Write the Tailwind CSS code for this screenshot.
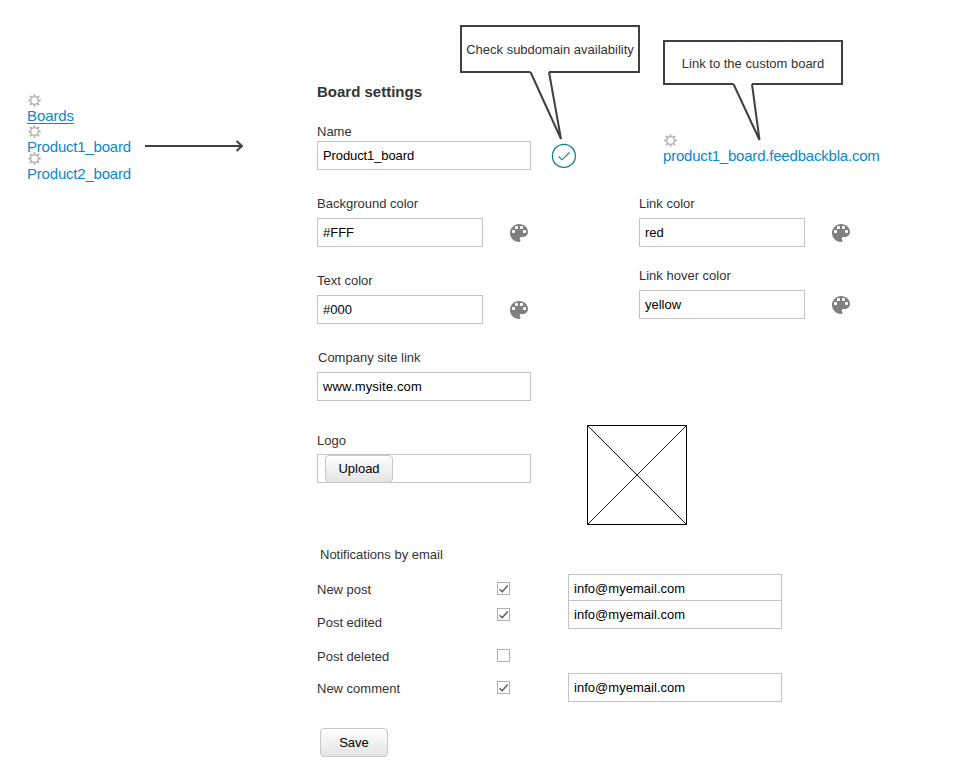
<!DOCTYPE html>
<html lang="en">
<head>
<meta charset="utf-8">
<title>Board settings</title>
<script src="https://cdn.jsdelivr.net/npm/@tailwindcss/browser@4"></script>
</head>
<body class="bg-white">
<svg class="hidden">
  <symbol id="gear" viewBox="0 0 14 14"><g fill="none" stroke="#b2b2b2"><circle cx="7" cy="7" r="4.100" stroke-width="1.400"/><path stroke-width="2" d="M7 .3V3M7 11v2.700M.3 7H3M11 7h2.700M2.100 2.100l1.800 1.800M10.100 10.100l1.800 1.800M2.100 11.900l1.800-1.800M10.100 3.900l1.800-1.800"/></g></symbol>
  <symbol id="palette" viewBox="0 0 18 18"><path fill="#808080" d="M9 0C4.030 0 0 4.030 0 9s4.030 9 9 9c.83 0 1.500-.67 1.500-1.500 0-.39-.15-.74-.39-1.010-.23-.26-.38-.61-.38-.99 0-.83.67-1.500 1.500-1.500H13c2.760 0 5-2.240 5-5 0-4.420-4.030-8-9-8z"/><g fill="#fff"><rect x="2" y="6" width="3" height="3" rx=".9"/><rect x="5" y="2" width="3" height="3" rx=".9"/><rect x="10" y="2" width="3" height="3" rx=".9"/><rect x="13" y="6" width="3" height="3" rx=".9"/></g></symbol>
  <symbol id="tick" viewBox="0 0 11 11"><path d="M1.500 6.200 4.200 8.700 9.700 2.500" fill="none" stroke="#555" stroke-width="1.300"/></symbol>
</svg>
<div class="relative flex h-[762px] w-[955px] overflow-hidden font-['Liberation_Sans',Arial,sans-serif] text-[13px] leading-4 text-[#333]">
  <nav class="ml-[27px] flex w-[118px] flex-col items-start pt-[94px] text-[15px] leading-4 tracking-[-0.2px] text-[#0a87d0]">
    <svg class="ml-px h-[13px] w-[13px]"><use href="#gear"/></svg>
    <a class="mt-px h-4 tracking-[-0.1px] underline underline-offset-2">Boards</a>
    <svg class="ml-px mt-px h-[13px] w-[13px]"><use href="#gear"/></svg>
    <a class="mt-px h-[13px]">Product1_board</a>
    <svg class="ml-px h-[13px] w-[13px]"><use href="#gear"/></svg>
    <a class="mt-px">Product2_board</a>
  </nav>
  <svg class="mt-[140px] h-[13px] w-[99px]" fill="none" stroke="#404040" stroke-width="2"><path d="M0 6H97M91.500 1l5.500 5-5.500 5"/></svg>
  <main class="ml-[73px] w-[600px] pt-[83px]">
    <h1 class="text-[15px] leading-[18px] font-bold">Board settings</h1>
    <section class="mt-[22px] flex h-[72px]">
      <div class="w-[214px]">
        <div class="h-[18px] pt-px">Name</div>
        <div class="h-[29px] border border-[#c3c3c3] pl-[5px] leading-[27px] tracking-[-0.1px] text-black">Product1_board</div>
      </div>
      <svg class="mt-[20px] ml-[20px] h-[26px] w-[26px]" viewBox="0 0 26 26" fill="none" stroke="#128080"><circle cx="12.900" cy="12.900" r="11.500" stroke-width="1.300"/><path d="M7.700 13.500l3.300 3.300 7.500-7.300" stroke-width="1.100"/></svg>
      <div class="ml-[86px] pt-[11px] text-[15px] tracking-[-0.2px] text-[#0a87d0]">
        <svg class="ml-px h-[13px] w-[13px]"><use href="#gear"/></svg>
        <a class="mt-px block">product1_board.feedbackbla.com</a>
      </div>
    </section>
    <section class="flex h-[154px]">
      <div class="w-[322px]">
        <div class="h-[23px] pt-px">Background color</div>
        <div class="flex items-center">
          <div class="h-[29px] w-[166px] border border-[#c3c3c3] pl-[5px] leading-[27px] text-black">#FFF</div>
          <svg class="ml-[27px] h-[18px] w-[18px]"><use href="#palette"/></svg>
        </div>
        <div class="mt-[25px] h-[23px] pt-px">Text color</div>
        <div class="flex items-center">
          <div class="h-[29px] w-[166px] border border-[#c3c3c3] pl-[5px] leading-[27px] text-black">#000</div>
          <svg class="ml-[27px] h-[18px] w-[18px]"><use href="#palette"/></svg>
        </div>
      </div>
      <div>
        <div class="h-[23px] pt-px">Link color</div>
        <div class="flex items-center">
          <div class="h-[29px] w-[166px] border border-[#c3c3c3] pl-[5px] leading-[27px] text-black">red</div>
          <svg class="ml-[27px] h-[18px] w-[18px]"><use href="#palette"/></svg>
        </div>
        <div class="mt-[20px] h-[23px] pt-px">Link hover color</div>
        <div class="flex items-center">
          <div class="h-[29px] w-[166px] border border-[#c3c3c3] pl-[5px] leading-[27px] text-black">yellow</div>
          <svg class="ml-[27px] h-[18px] w-[18px]"><use href="#palette"/></svg>
        </div>
      </div>
    </section>
    <section class="flex h-[197px]">
      <div class="w-[214px]">
        <div class="h-[23px] pt-px pl-px">Company site link</div>
        <div class="h-[29px] border border-[#c3c3c3] pl-[5px] leading-[27px] tracking-[0.15px] text-black">www.mysite.com</div>
        <div class="mt-[31px] h-[22px] pt-px">Logo</div>
        <div class="h-[29px] border border-[#c3c3c3] pl-[7px]">
          <button class="block h-[28px] w-[68px] rounded border border-[#c8c8c8] bg-linear-to-b from-white to-[#e4e4e4] text-black">Upload</button>
        </div>
      </div>
      <svg class="mt-[76px] ml-[56px] h-[100px] w-[100px]" fill="none" stroke="#000"><path d="M.5.500h99v99H.5z"/><path d="M.5.500l99 99M99.500.500l-99 99" stroke-width=".9"/></svg>
    </section>
    <h2 class="h-[28px] pt-px pl-[3px]">Notifications by email</h2>
    <section class="flex h-[154px]">
      <div class="w-[180px] pt-[8px]">
        <div class="h-[33px]">New post</div>
        <div class="h-[34px]">Post edited</div>
        <div class="h-[32px]">Post deleted</div>
        <div>New comment</div>
      </div>
      <div class="w-[71px] pt-[8px]">
        <div class="h-[13px] w-[13px] border border-[#b0b0b0]"><svg class="h-[11px] w-[11px]"><use href="#tick"/></svg></div>
        <div class="mt-[13px] h-[13px] w-[13px] border border-[#b0b0b0]"><svg class="h-[11px] w-[11px]"><use href="#tick"/></svg></div>
        <div class="mt-[28px] h-[13px] w-[13px] border border-[#b0b0b0]"></div>
        <div class="mt-[19px] h-[13px] w-[13px] border border-[#b0b0b0]"><svg class="h-[11px] w-[11px]"><use href="#tick"/></svg></div>
      </div>
      <div class="w-[214px] tracking-[0.03px] text-black">
        <div class="h-[26px] border border-b-0 border-[#c3c3c3] pl-[5px] leading-[27px]">info@myemail.com</div>
        <div class="h-[29px] border border-[#c3c3c3] pl-[5px] leading-[27px]">info@myemail.com</div>
        <div class="mt-[44px] h-[29px] border border-[#c3c3c3] pl-[5px] leading-[27px]">info@myemail.com</div>
      </div>
    </section>
    <button class="ml-[3px] block h-[29px] w-[68px] rounded border border-[#c8c8c8] bg-linear-to-b from-white to-[#e4e4e4] text-black">Save</button>
  </main>
  <div class="absolute top-[25px] left-[460px] h-[115px] w-[180px]">
    <svg class="absolute inset-0 h-full w-full overflow-visible" fill="white" stroke="#404040" stroke-width="2"><path stroke-linejoin="bevel" d="M89 47L101 114 70.500 47"/><path d="M70.500 47H1V1H179V47H89"/></svg>
    <div class="relative pt-[17px] text-center">Check subdomain availability</div>
  </div>
  <div class="absolute top-[40px] left-[663px] h-[103px] w-[180px]">
    <svg class="absolute inset-0 h-full w-full overflow-visible" fill="white" stroke="#404040" stroke-width="2"><path stroke-linejoin="bevel" d="M89 44L96.500 100 70.500 44"/><path d="M70.500 44H1V1H179V44H89"/></svg>
    <div class="relative pt-[16px] text-center">Link to the custom board</div>
  </div>
</div>
</body>
</html>
